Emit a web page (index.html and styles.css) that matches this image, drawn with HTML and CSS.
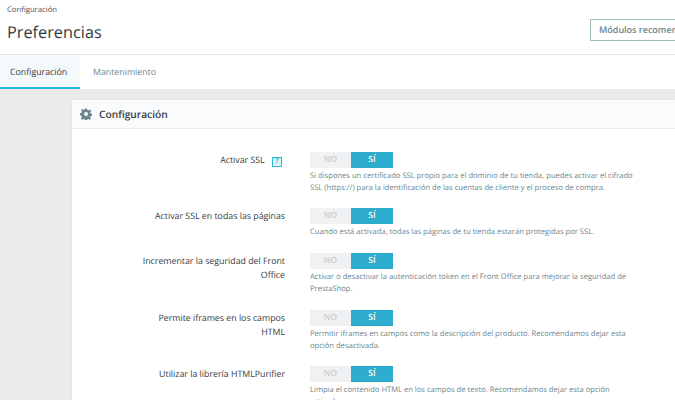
FILE: index.html
```html
<!DOCTYPE html>
<html lang="es">
<head>
  <meta charset="UTF-8">
  <title>Preferencias</title>
  <link rel="stylesheet" href="styles.css">
</head>
<body>
  <header class="page-head">
    <div class="crumb">Configuración</div>
    <div class="title-row">
      <h1>Preferencias</h1>
      <a class="head-btn">Módulos recomen</a>
    </div>
  </header>
  <nav class="tabs">
    <a class="tab active">Configuración</a>
    <a class="tab">Mantenimiento</a>
  </nav>
  <main class="content">
    <section class="card">
      <div class="card-head">
        <svg class="gear" viewBox="0 0 24 24"><path d="M10 1h4l.7 3.200 1.900.8 2.800-1.800 2.800 2.800-1.800 2.800.8 1.900 3.200.7v4l-3.200.7-.8 1.900 1.800 2.800-2.800 2.800-2.800-1.800-1.900.8-.7 3.200h-4l-.7-3.200-1.900-.8-2.800 1.800-2.800-2.800 1.800-2.800-.8-1.900L0 14v-4l3.200-.7.8-1.900L2.200 4.600 5 1.800l2.800 1.800 1.900-.8zM12 8a4 4 0 1 0 0 8 4 4 0 0 0 0-8z" fill-rule="evenodd"/></svg>
        <h2>Configuración</h2>
      </div>
      <div class="card-body">
        <div class="row">
          <div class="label">Activar SSL <span class="help-badge">?</span></div>
          <div class="field">
            <div class="switch"><span class="no">NO</span><span class="yes">SÍ</span></div>
            <p class="help">Si dispones un certificado SSL propio para el dominio de tu tienda, puedes activar el cifrado SSL (https://) para la identificación de las cuentas de cliente y el proceso de compra.</p>
          </div>
        </div>
        <div class="row row-wide">
          <div class="label">Activar SSL en todas las páginas</div>
          <div class="field">
            <div class="switch"><span class="no">NO</span><span class="yes">SÍ</span></div>
            <p class="help">Cuando está activada, todas las páginas de tu tienda estarán protegidas por SSL.</p>
          </div>
        </div>
        <div class="row row-wide">
          <div class="label">Incrementar la seguridad del Front Office</div>
          <div class="field">
            <div class="switch"><span class="no">NO</span><span class="yes">SÍ</span></div>
            <p class="help">Activar o desactivar la autenticación token en el Front Office para mejorar la seguridad de PrestaShop.</p>
          </div>
        </div>
        <div class="row">
          <div class="label">Permite iframes en los campos HTML</div>
          <div class="field">
            <div class="switch"><span class="no">NO</span><span class="yes">SÍ</span></div>
            <p class="help">Permitir iframes en campos como la descripción del producto. Recomendamos dejar esta opción desactivada.</p>
          </div>
        </div>
        <div class="row">
          <div class="label">Utilizar la librería HTMLPurifier</div>
          <div class="field">
            <div class="switch"><span class="no">NO</span><span class="yes">SÍ</span></div>
            <p class="help">Limpia el contenido HTML en los campos de texto. Recomendamos dejar esta opción activada.</p>
          </div>
        </div>
      </div>
    </section>
  </main>
</body>
</html>
```

FILE: styles.css
```css
html, body {
  margin: 0;
  height: 400px;
  overflow: hidden;
}

body {
  width: 675px;
  background-color: #ebebeb;
  font-family: "Open Sans", sans-serif;
  color: #363a41;
  text-rendering: geometricPrecision;
}

.page-head {
  height: 54px;
  background-color: white;
  border-bottom: 1px solid #e4e6e8;
  padding-left: 7px;
}

.crumb {
  padding-top: 4px;
  font-size: 7.7px;
  line-height: 12px;
  color: #4a5258;
}

.title-row {
  display: flex;
  justify-content: space-between;
  align-items: flex-start;
}

h1 {
  margin: 0;
  font-size: 16.3px;
  font-weight: 400;
  line-height: 32px;
}

.head-btn {
  flex: none;
  width: 76px;
  height: 20px;
  padding-left: 8px;
  border: 1px solid #a3b8bd;
  border-right: 0;
  margin-top: 3px;
  font-size: 9px;
  font-weight: 600;
  line-height: 20px;
  color: #6c868e;
  white-space: nowrap;
  overflow: hidden;
}

.tabs {
  display: flex;
  height: 34px;
  background-color: white;
}

.tab {
  padding: 10px 0 0 13px;
  font-size: 8.8px;
  line-height: 14px;
  color: #6c868e;
}

.tab.active {
  width: 70px;
  height: 22px;
  padding-left: 10px;
  background-color: #f4f9fb;
  border-bottom: 2px solid #25b9d7;
  color: #363a41;
}

.content {
  padding: 11px 0 0 72px;
}

.card {
  background-color: white;
  width: 603px;
  border-radius: 3px 0 0 0;
  box-shadow: 0 0 2px rgba(0, 0, 0, 0.08);
}

.card-head {
  display: flex;
  align-items: center;
  height: 28px;
  padding-left: 8px;
  background-color: #fafbfc;
  border-bottom: 1px solid #e8edf0;
}

.gear {
  width: 12px;
  height: 12px;
  fill: #6c868e;
  margin-right: 7px;
}

h2 {
  margin: 0;
  font-size: 10.2px;
  font-weight: 600;
  color: #363a41;
}

.card-body {
  padding-top: 23px;
}

.row {
  display: flex;
  margin-bottom: 14px;
}

.row-wide {
  margin-bottom: 15px;
}

.label {
  width: 146px;
  margin-left: 67px;
  padding-top: 1px;
  font-size: 8.8px;
  line-height: 14px;
  text-align: right;
  color: #363a41;
}

.help-badge {
  display: inline-block;
  width: 8px;
  height: 8px;
  margin: 0 3px 0 5px;
  border: 1px solid #25b9d7;
  background-color: #dff5f9;
  font-size: 7px;
  font-weight: 700;
  line-height: 8px;
  text-align: center;
  color: #25b9d7;
}

.field {
  width: 330px;
  margin-left: 25px;
}

.switch {
  display: flex;
  width: 83px;
  height: 16px;
  font-size: 8.5px;
  font-weight: 600;
  line-height: 16px;
  text-align: center;
}

.no {
  width: 41px;
  background-color: #eff1f2;
  color: #c5ced2;
}

.yes {
  width: 42px;
  background-color: #2eacce;
  color: white;
}

.help {
  margin: 2px 0 0;
  font-size: 7.6px;
  line-height: 12px;
  color: #6c868e;
}
```
